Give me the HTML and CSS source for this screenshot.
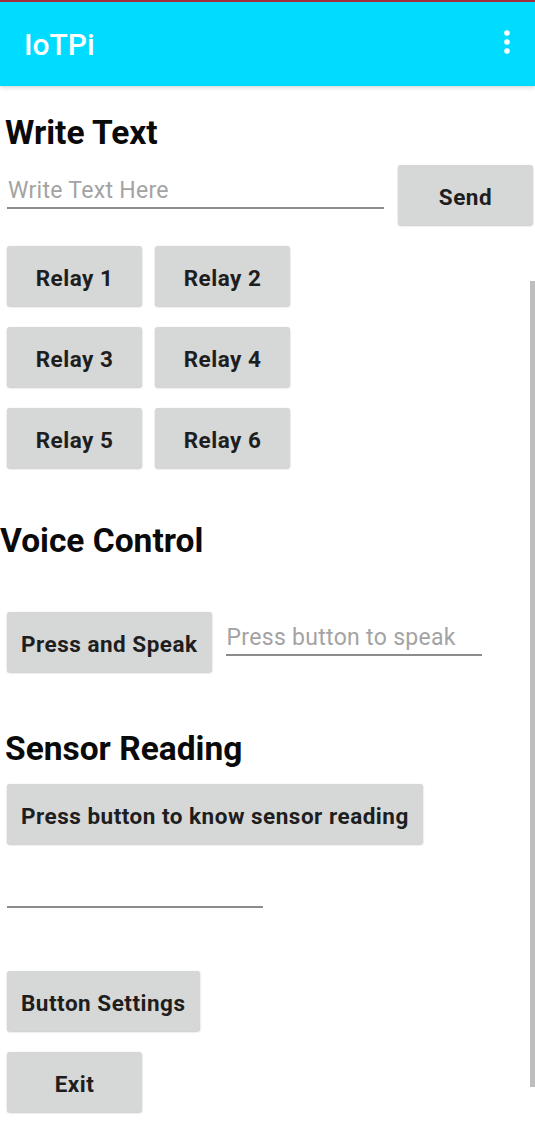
FILE: index.html
```html
<!DOCTYPE html>
<html lang="en">
<head>
<meta charset="utf-8">
<title>IoTPi</title>
<link rel="stylesheet" href="styles.css">
</head>
<body>
<div class="screen">
  <div class="status-line"></div>
  <header class="appbar">
    <span class="app-title">IoTPi</span>
    <svg class="overflow" width="12" height="26" viewBox="0 0 12 26" aria-hidden="true">
      <circle cx="6" cy="4" r="2.8" fill="#fff"/>
      <circle cx="6" cy="13" r="2.8" fill="#fff"/>
      <circle cx="6" cy="22" r="2.8" fill="#fff"/>
    </svg>
  </header>
  <main class="content">
    <h2 class="heading heading-write">Write Text</h2>
    <div class="row row-write">
      <input class="field field-write" type="text" placeholder="Write Text Here">
      <button class="btn btn-fixed">Send</button>
    </div>
    <div class="relays">
      <button class="btn btn-fixed">Relay 1</button>
      <button class="btn btn-fixed">Relay 2</button>
      <button class="btn btn-fixed">Relay 3</button>
      <button class="btn btn-fixed">Relay 4</button>
      <button class="btn btn-fixed">Relay 5</button>
      <button class="btn btn-fixed">Relay 6</button>
    </div>
    <h2 class="heading heading-voice">Voice Control</h2>
    <div class="row row-voice">
      <button class="btn btn-auto">Press and Speak</button>
      <input class="field field-voice" type="text" placeholder="Press button to speak">
    </div>
    <h2 class="heading heading-sensor">Sensor Reading</h2>
    <div class="row row-sensor">
      <button class="btn btn-auto">Press button to know sensor reading</button>
    </div>
    <input class="field field-sensor" type="text">
    <div class="row row-settings">
      <button class="btn btn-auto">Button Settings</button>
    </div>
    <div class="row row-exit">
      <button class="btn btn-fixed">Exit</button>
    </div>
  </main>
  <div class="scrollbar"></div>
</div>
</body>
</html>
```

FILE: styles.css
```css
* {
  box-sizing: border-box;
}

html, body {
  margin: 0;
  padding: 0;
  background: #ffffff;
}

body {
  font-family: Roboto, "Noto Sans", "Liberation Sans", sans-serif;
  color: #111;
}

.screen {
  position: relative;
  width: 535px;
  height: 1124px;
  overflow: hidden;
}

.status-line {
  height: 2px;
  background: #a32d3d;
}

.appbar {
  height: 84px;
  background: #00dcff;
  display: flex;
  align-items: center;
  justify-content: space-between;
  padding: 0 22px 0 24px;
  box-shadow: 0 2px 4px rgba(0, 0, 0, 0.14);
  position: relative;
  z-index: 1;
}

.app-title {
  color: #ffffff;
  font-size: 30px;
  font-weight: 500;
}

.overflow {
  display: block;
  margin-top: -4px;
}

.content {
  padding: 0 0 0 7px;
}

.heading {
  margin: 0;
  font-size: 33.5px;
  line-height: 40px;
  font-weight: 700;
  color: #0a0a0a;
}

.heading-write {
  margin-top: 27px;
  margin-left: -2px;
}

.heading-voice {
  margin-top: 53px;
  margin-left: -7px;
}

.heading-sensor {
  margin-top: 57px;
  margin-left: -2px;
}

.row {
  display: flex;
  align-items: flex-start;
  gap: 14px;
}

.row-write {
  margin-top: 12px;
}

.row-voice {
  margin-top: 51px;
}

.row-sensor {
  margin-top: 15px;
}

.row-settings {
  margin-top: 63px;
}

.row-exit {
  margin-top: 21px;
}

.btn {
  height: 60px;
  border: none;
  border-radius: 3px;
  background: #d6d7d7;
  color: #1e1e1e;
  font-family: Roboto, "Noto Sans", "Liberation Sans", sans-serif;
  font-size: 22.5px;
  font-weight: 700;
  letter-spacing: 0.5px;
  box-shadow: 0 1px 2px rgba(0, 0, 0, 0.22), 0 0 1px rgba(0, 0, 0, 0.08);
  padding: 3px 14px 0;
  cursor: pointer;
}

.btn-fixed {
  width: 135px;
}

.btn-auto {
  min-width: 135px;
}

.relays {
  margin-top: 21px;
  display: grid;
  grid-template-columns: 135px 135px;
  column-gap: 13px;
  row-gap: 21px;
}

.field {
  display: block;
  height: 32px;
  padding: 0 0 4px 1px;
  border: none;
  border-bottom: 2px solid #8c8c8c;
  background: transparent;
  font-family: Roboto, "Noto Sans", "Liberation Sans", sans-serif;
  font-size: 23px;
  letter-spacing: 0.3px;
  line-height: 26px;
  color: #222;
  outline: none;
}

.field::placeholder {
  color: #a3a3a3;
}

.field-write {
  width: 377px;
  margin-top: 12px;
}

.field-voice {
  width: 256px;
  margin-top: 12px;
}

.field-sensor {
  width: 256px;
  margin-top: 32px;
}

.scrollbar {
  position: absolute;
  left: 530px;
  top: 281px;
  width: 5px;
  height: 806px;
  background: #bdbdbd;
}
```
